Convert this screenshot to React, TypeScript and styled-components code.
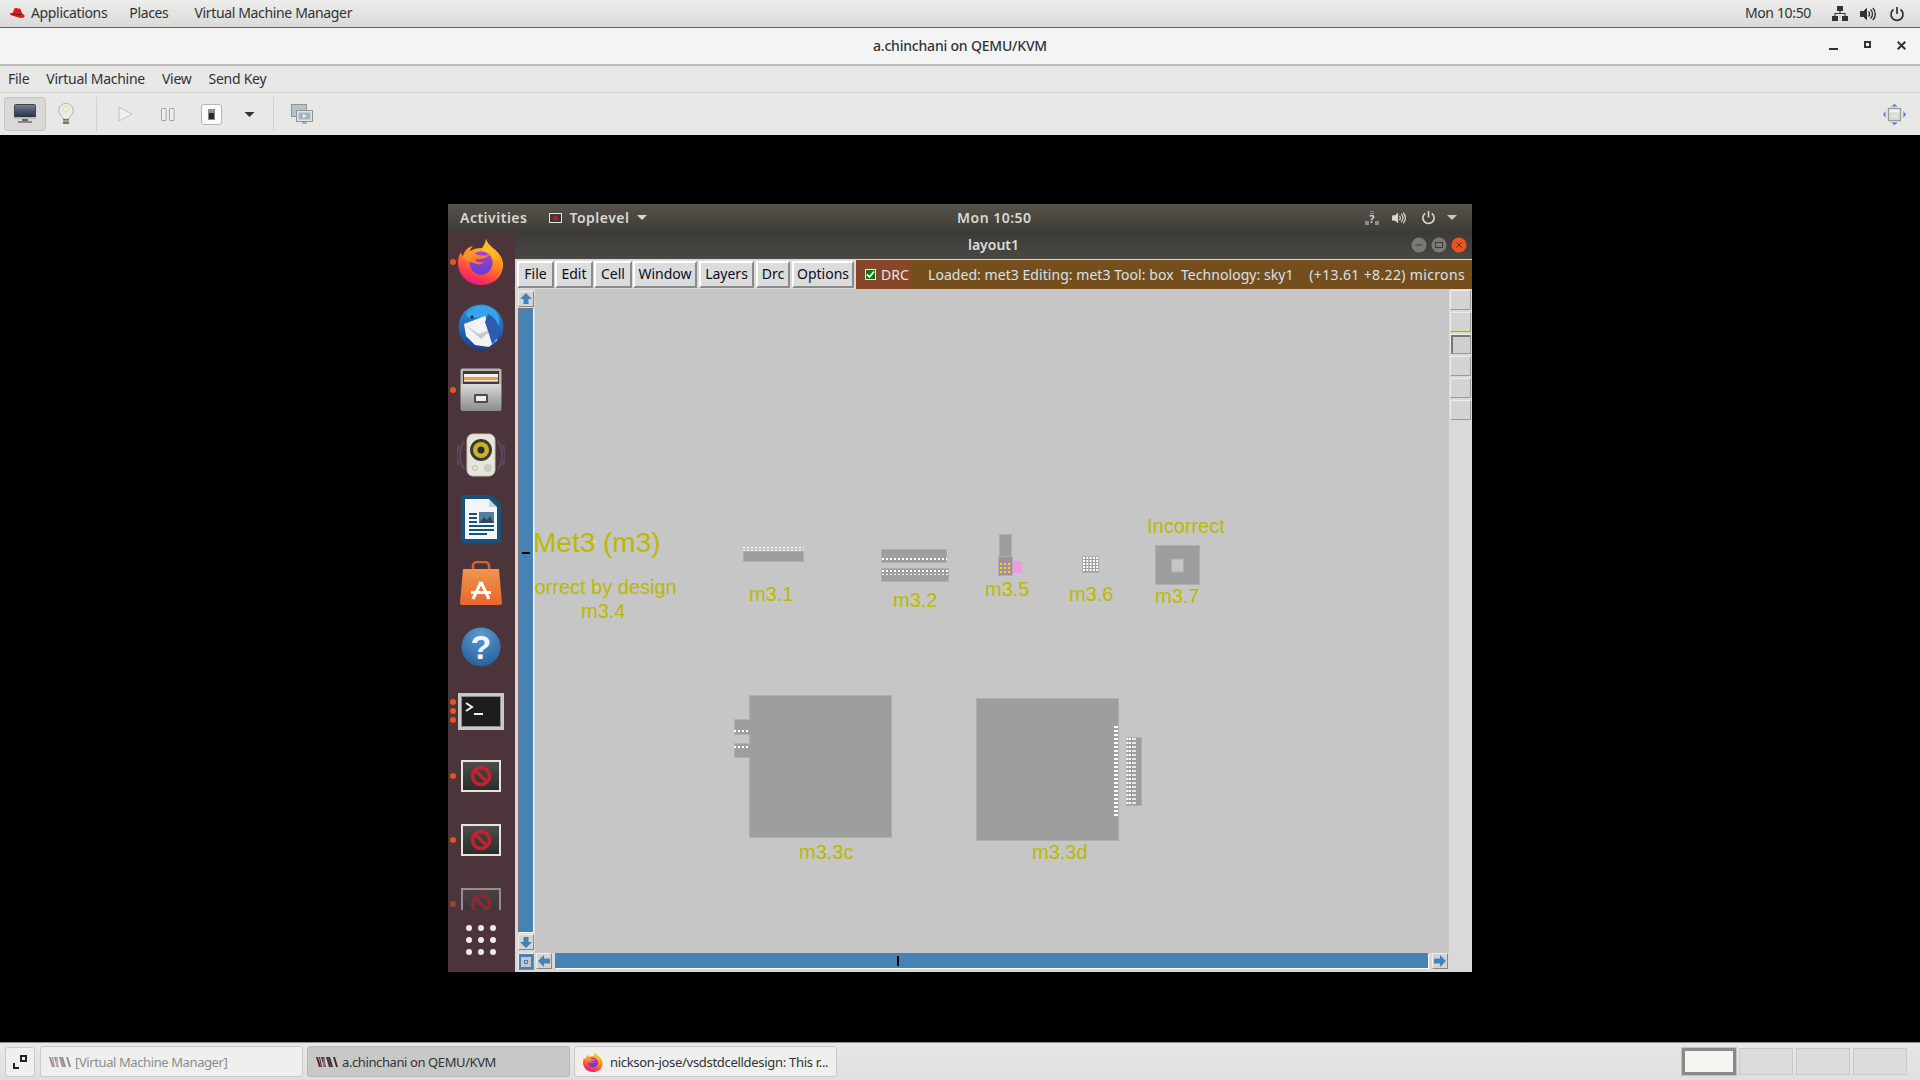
import React from "react";
import styled, { createGlobalStyle } from "styled-components";

const Global = createGlobalStyle`
  html, body { margin: 0; padding: 0; background: #000; }
  #root { width: 1920px; height: 1080px; overflow: hidden; }
`;

const UI = `"Noto Sans", "Open Sans", sans-serif`;

const Screen = styled.div`
  width: 1920px; height: 1080px; display: flex; flex-direction: column;
  background: #000; font-family: ${UI}; font-size: 14px; color: #2e3436;
`;
const TopPanel = styled.header`
  height: 27px; flex: none; display: flex; align-items: center; padding: 0 15px 0 9px;
  background: linear-gradient(#ededeb, #dadad8); border-bottom: 1px solid #5c5c5c; box-sizing: content-box;
`;
const PanelItem = styled.span<{ $gap?: number }>`
  margin-left: ${p => p.$gap ?? 0}px; margin-top: -2px; letter-spacing: -0.35px; color: #2e3436; line-height: 1;
`;
const Spacer = styled.div`flex: 1;`;
const PanelIcon = styled.span<{ $gap: number }>`
  display: inline-flex; margin-left: ${p => p.$gap}px;
`;
const TitleBar = styled.div`
  height: 35px; flex: none; display: flex; align-items: center; justify-content: center;
  position: relative; background: #f4f4f4; border-bottom: 2px solid #bdbdbb; padding-bottom: 1px; box-sizing: content-box;
  font-weight: 500; letter-spacing: -0.2px; color: #2e3436;
`;
const WindowControls = styled.div`
  position: absolute; right: 14px; top: 13px; display: flex; gap: 26px; align-items: flex-start;
`;
const MenuBar = styled.nav`
  height: 27px; flex: none; display: flex; align-items: center; padding-left: 8px; gap: 17px;
  background: #e8e8e7; border-bottom: 1px solid #d3d3d1; box-sizing: content-box; margin-top: -1px;
`;
const MenuEntry = styled.span`letter-spacing: -0.27px; color: #2e3436;`;
const Toolbar = styled.div`
  height: 42px; flex: none; display: flex; align-items: center; background: #e8e8e7; padding-left: 4px;
`;
const ToolToggle = styled.div`
  width: 42px; height: 34px; display: flex; align-items: center; justify-content: center;
  background: #d9d9d7; border: 1px solid #c6c6c4; border-radius: 3px; box-sizing: border-box;
`;
const ToolButton = styled.div<{ $w: number }>`
  width: ${p => p.$w}px; height: 34px; display: flex; align-items: center; justify-content: center; flex: none;
`;
const ToolSep = styled.div<{ $l?: number }>`
  width: 1px; height: 34px; background: #d2d2d0; margin: 0 10px 0 ${p => p.$l ?? 10}px;
`;
const FitIcon = styled.div`margin-left: auto; margin-right: 14px; display: flex;`;

const Viewer = styled.main`
  flex: 1; min-height: 0; padding: 69px 0 0 448px; background: #000;
`;
const Guest = styled.div`
  width: 1024px; height: 768px; display: flex; flex-direction: column; overflow: hidden;
`;
const GuestPanel = styled.div`
  height: 27px; flex: none; display: grid; grid-template-columns: 497px auto 1fr; align-items: center;
  padding: 0 15px 0 12px; background: linear-gradient(#56524a, #3f3d39);
  color: #d9d8d3; font-family: "Noto Sans", sans-serif; font-size: 14px; font-weight: 600; letter-spacing: 0.5px;
`;
const GuestLeft = styled.div`display: flex; align-items: center;`;
const GuestMenu = styled.span`display: inline-flex; align-items: center; gap: 7px; margin-left: 22px;`;
const GuestRight = styled.div`display: flex; align-items: center; justify-content: flex-end;`;
const GuestIcon = styled.span<{ $gap?: number }>`display: inline-flex; margin-left: ${p => p.$gap ?? 0}px;`;
const GuestBody = styled.div`flex: 1; min-height: 0; display: flex;`;
const Dock = styled.aside`
  width: 67px; flex: none; display: flex; flex-direction: column; background: #4b343a;
`;
const DockList = styled.div`
  height: 679px; flex: none; overflow: hidden; display: flex; flex-direction: column; padding-right: 1px;
`;
const DockItem = styled.div<{ $fade?: boolean; $first?: boolean }>`
  height: 64.2px; flex: none; display: flex; align-items: center; justify-content: center;
  margin-top: ${p => (p.$first ? -1 : 0)}px;
  position: relative; opacity: ${p => (p.$fade ? 0.5 : 1)};
`;
const RunDots = styled.div`
  position: absolute; left: 2px; top: 0; bottom: 0; display: flex; flex-direction: column;
  justify-content: center; gap: 3px;
`;
const RunDot = styled.i`display: block; width: 6px; height: 6px; border-radius: 50%; background: #e9541f;`;
const AppGrid = styled.div`
  display: grid; grid-template-columns: repeat(3, 6px); gap: 6px; justify-content: center; padding: 15px 1px 0 0;
`;
const AppDot = styled.i`display: block; width: 6px; height: 6px; border-radius: 50%; background: #eeeae8;`;

const MagicWindow = styled.section`flex: 1; min-width: 0; display: flex; flex-direction: column;`;
const MagicTitle = styled.div`
  height: 27px; padding-bottom: 1px; flex: none; display: flex; align-items: center; justify-content: center; position: relative;
  background: linear-gradient(#3c3a36, #4a4843); color: #dcdbd6; font-size: 14px; font-weight: 600;
  border-bottom: 1px solid #d8d8d8; box-sizing: content-box;
`;
const TitleButtons = styled.div`
  position: absolute; right: 5px; top: 6px; display: flex; gap: 4px;
`;
const MagicMenu = styled.div`
  height: 29px; flex: none; display: flex; background: #d9d9d9; align-items: stretch;
`;
const MenuBtn = styled.button<{ $w: number; $m?: number }>`
  width: ${p => p.$w}px; margin: 1px 0 1px ${p => p.$m ?? 1}px; padding: 0 0 2px; box-sizing: border-box; flex: none;
  background: #dcdcdc; color: #0c0c20; font: 14px ${UI};
  border: 2px solid; border-color: #fff #8a8a8a #8a8a8a #fff;
`;
const DrcBtn = styled.div`
  width: 56px; margin-left: 2px; flex: none; display: flex; align-items: center; gap: 5px; padding: 0 0 1px 9px;
  box-sizing: border-box; background: #87452a; color: #e6e6e6; font-size: 14px;
`;
const DrcCheck = styled.span`
  width: 11px; height: 11px; flex: none; background: #0a7a18; border: 1px solid #e6e6e6;
  display: flex; align-items: center; justify-content: center; box-sizing: border-box;
`;
const Status = styled.div`
  flex: 1; display: flex; justify-content: space-between; align-items: center; padding: 0 7px 1px 16px;
  background: #744f1d; color: #d6e2ea; font-size: 14px; white-space: pre;
`;
const StatusInfo = styled.span`letter-spacing: 0.05px;`;
const StatusCoord = styled.span`letter-spacing: 0.35px;`;
const MagicBody = styled.div`
  flex: 1; min-height: 0; display: grid; grid-template-columns: 20px 914px 23px; grid-template-rows: 664px 19px;
  background: #d9d9d9;
`;
const VScroll = styled.div`
  grid-row: 1 / 3; display: flex; flex-direction: column; align-items: center; padding: 2px 0 2px 1px;
`;
const ArrowBtn = styled.div`
  width: 16px; height: 16px; flex: none; display: flex; align-items: center; justify-content: center;
  background: #d4d4d4; border: 1px solid; border-color: #eee #888 #888 #eee; box-sizing: border-box;
`;
const VTrough = styled.div`
  flex: 1; width: 16px; margin: 1px 0; background: #4682b4; border: 1px solid; border-color: #777 #fff #fff #777;
  box-sizing: border-box; position: relative;
`;
const VMark = styled.i`position: absolute; left: 3px; top: 243px; width: 8px; height: 2px; background: #000;`;
const Corner = styled(ArrowBtn)`margin-top: 3px; height: 17px; background: #4682b4;`;
const CornerInner = styled.i`
  display: block; width: 10px; height: 10px; box-sizing: border-box; background: #c6c6c6; border: 3px solid #c6c6c6;
  outline: 1px solid #4682b4; outline-offset: -4px;
`;
const Canvas = styled.div`position: relative; overflow: hidden; background: #c6c6c6;`;
const LayoutArt = styled.svg`position: absolute; inset: 0; display: block;`;
const Label = styled.span<{ $x: number; $y: number; $s: number }>`
  position: absolute; left: ${p => p.$x - 535}px; top: ${p => p.$y - 289 - p.$s / 2}px;
  font: ${p => p.$s}px/${p => p.$s}px "Liberation Sans", Arial, sans-serif; color: #bbb900; white-space: nowrap;
`;
const Palette = styled.div`
  grid-row: 1 / 3; grid-column: 3; display: flex; flex-direction: column; gap: 2px; padding: 1px 1px 0 1px; align-items: stretch;
`;
const PaletteCell = styled.div<{ $tone?: "plain" | "yellow" | "dark" }>`
  height: 20px; box-sizing: border-box; background: #d4d4d4;
  border: 1px solid; border-color: #eee #999 #999 #eee;
  ${p => p.$tone === "yellow" ? "box-shadow: inset 0 0 0 1px #dcdc80;" : ""}
  ${p => p.$tone === "dark" ? "box-shadow: inset 1px 1px 0 1px #777; background:#cfcfcf;" : ""}
`;
const HScroll = styled.div`
  grid-column: 2; grid-row: 2; display: flex; align-items: flex-start; padding: 0 1px; gap: 3px;
`;
const HTrough = styled.div`
  flex: 1; height: 16px; background: #4682b4; border: 1px solid; border-color: #777 #fff #fff #777;
  box-sizing: border-box; position: relative;
`;
const HMark = styled.i`position: absolute; left: 341px; top: 2px; width: 2px; height: 10px; background: #000;`;

const Taskbar = styled.footer`
  height: 38px; flex: none; display: flex; align-items: center; padding: 0 13px 0 5px;
  background: linear-gradient(#e8e8e6, #dfdfdd); border-top: 1px solid #8f8f8d; box-sizing: border-box;
`;
const ShowDesktop = styled.div`
  width: 30px; height: 30px; flex: none; display: flex; align-items: center; justify-content: center;
  background: #efefee; border: 1px solid #c9c9c7; border-radius: 3px; box-sizing: border-box; margin-right: 5px;
`;
const TaskBtn = styled.div<{ $active?: boolean; $dim?: boolean; $wide?: boolean }>`
  width: 263px; height: 31px; flex: none; display: flex; align-items: center;
  gap: ${p => (p.$wide ? 7 : 3)}px; padding-left: ${p => (p.$wide ? 8 : 7)}px; margin-right: 4px;
  box-sizing: border-box; border: 1px solid ${p => (p.$active ? "#b8b8b6" : "#c9c9c7")}; border-radius: 3px;
  background: ${p => (p.$active ? "#c8c8c6" : "#efefee")}; color: ${p => (p.$dim ? "#8b8d8e" : "#2e3436")};
  font-size: 13px; letter-spacing: ${p => (p.$wide ? -0.3 : -0.4)}px; white-space: nowrap;
`;
const Workspaces = styled.div`margin-left: auto; display: flex; gap: 3px;`;
const Workspace = styled.div<{ $on?: boolean }>`
  width: 54px; height: 27px; box-sizing: border-box;
  background: ${p => (p.$on ? "#f6f5f2" : "#dcdcdc")};
  border: ${p => (p.$on ? "3px solid #8a8a8a" : "1px solid #cacac8")};
  ${p => (p.$on ? "outline: 1px solid #c0c0be;" : "")}
`;

/* ---- icons ---- */
const Hat = () => (
  <svg width="16" height="13" viewBox="0 0 16 13">
    <path d="M4 6 C4.5 3 5 1 7 1 C8 1 9 2 10.5 1.5 C12 1.5 12.5 5 13 6.5 C14.5 7 16 8 15.5 9.5 C15 11.5 11 11 8 10 C5 9 1 8.5 1 7 C1 6 2.5 5.8 4 6Z" fill="#e01a1a" />
    <path d="M3.5 6.2 C6 7.5 10 8.5 13 6.8" stroke="#222" strokeWidth="0.8" fill="none" />
  </svg>
);
const Network = ({ c = "#2e3436" }: { c?: string }) => (
  <svg width="16" height="16" viewBox="0 0 16 16" fill={c}>
    <rect x="5" y="0" width="6" height="5" /><rect x="0" y="10" width="6" height="5" /><rect x="10" y="10" width="6" height="5" />
    <path d="M7.5 5h1v2h5v3h-1V8H3.500v2h-1V7h5z" />
  </svg>
);
const Volume = ({ c = "#2e3436", s = 16 }: { c?: string; s?: number }) => (
  <svg width={s} height={s} viewBox="0 0 16 16" fill="none" stroke={c}>
    <path d="M0.500 5.500h3l3-3v11l-3-3h-3z" fill={c} />
    <path d="M8.500 5.500a3.500 3.500 0 0 1 0 5M10.500 3.500a6 6 0 0 1 0 9M12.800 2a8.500 8.500 0 0 1 0 12" strokeWidth="1.400" />
  </svg>
);
const Power = ({ c = "#2e3436", s = 16 }: { c?: string; s?: number }) => (
  <svg width={s} height={s} viewBox="0 0 16 16" fill="none" stroke={c} strokeWidth="1.700">
    <path d="M4.500 3.500a6 6 0 1 0 7 0M8 1v7" />
  </svg>
);
const Caret = ({ c = "#d9d8d3", w = 10, h = 5 }: { c?: string; w?: number; h?: number }) => (
  <svg width={w} height={h} viewBox="0 0 10 5"><path d="M0 0h10L5 5z" fill={c} /></svg>
);
const Monitor = () => (
  <svg width="22" height="20" viewBox="0 0 22 20">
    <defs><linearGradient id="mon" x1="0" y1="0" x2="0" y2="1"><stop offset="0" stopColor="#6f8399" /><stop offset="1" stopColor="#1c2733" /></linearGradient></defs>
    <rect x="0.500" y="0.500" width="21" height="14" rx="1" fill="url(#mon)" stroke="#444" />
    <rect x="0" y="13" width="22" height="2" fill="#bbb" />
    <rect x="8" y="15" width="6" height="2" fill="#666" /><rect x="4" y="17" width="14" height="2" fill="#888" />
  </svg>
);
const Bulb = () => (
  <svg width="16" height="22" viewBox="0 0 16 22">
    <path d="M8 .5a7 7 0 0 1 4 12.800c-.8.7-1 1.700-1 2.700H5c0-1-.2-2-1-2.700A7 7 0 0 1 8 .5z" fill="#ececea" stroke="#b4b4ac" />
    <circle cx="8" cy="6" r="3" fill="none" stroke="#eae6a0" strokeWidth="1.500" />
    <rect x="5" y="16" width="6" height="5" fill="#77776f" /><rect x="5" y="17.500" width="6" height="1" fill="#ccc" />
  </svg>
);
const PlayIcon = () => (
  <svg width="15" height="16" viewBox="0 0 15 16"><path d="M1 1l13 7L1 15z" fill="#efefee" stroke="#c2c2c0" /></svg>
);
const PauseIcon = () => (
  <svg width="14" height="13" viewBox="0 0 14 13" fill="#efefee" stroke="#a4a4a2">
    <rect x=".5" y=".5" width="4.500" height="12" rx=".5" /><rect x="8.500" y=".5" width="4.500" height="12" rx=".5" />
  </svg>
);
const SwitchIcon = () => (
  <svg width="21" height="21" viewBox="0 0 21 21">
    <rect x=".5" y=".5" width="20" height="20" rx="2.500" fill="#fbfbfb" stroke="#b5b5b3" />
    <rect x="7" y="5" width="7" height="11" fill="#8e8e8c" /><rect x="8" y="9" width="5" height="6" fill="#2a2a2a" />
  </svg>
);
const ScreensIcon = () => (
  <svg width="22" height="21" viewBox="0 0 22 21">
    <rect x=".5" y=".5" width="15" height="12" fill="#b9c1c9" stroke="#8f9396" />
    <rect x="5.500" y="6.500" width="16" height="11" fill="#dfe3e6" stroke="#8f9396" />
    <rect x="7.500" y="8.500" width="12" height="7" fill="#a8b3bd" /><path d="M12 10l3.500 2-3.500 2z" fill="#f2f2f2" />
    <rect x="11" y="18" width="5" height="2" fill="#b0b0ae" />
  </svg>
);
const Fit = () => (
  <svg width="23" height="21" viewBox="0 0 23 21">
    <path d="M11.500 0l3 2.500h-6zM11.500 21l3-2.500h-6zM0 10.500l2.500-3v6zM23 10.500l-2.500-3v6z" fill="#4f7fbd" stroke="#8fb0d8" strokeWidth=".6" />
    <rect x="5.500" y="4.500" width="12" height="12" fill="#f2f2f2" stroke="#9a9a98" strokeWidth="1.400" />
    <rect x="7" y="9" width="9" height="6" fill="#e2e2e0" stroke="#c2c2c0" strokeWidth=".6" />
  </svg>
);
const WinMin = () => <svg width="9" height="10" viewBox="0 0 9 10"><rect x="0" y="7" width="9" height="2" fill="#2e3436" /></svg>;
const WinMax = () => <svg width="7" height="7" viewBox="0 0 7 7"><rect x="1" y="1" width="5" height="5" fill="none" stroke="#2e3436" strokeWidth="2" /></svg>;
const WinClose = () => <svg width="9" height="9" viewBox="0 0 9 9"><path d="M.7.7l7.600 7.600M8.300.7L.7 8.300" stroke="#2e3436" strokeWidth="2" /></svg>;

const Firefox = ({ s = 46 }: { s?: number }) => (
  <svg width={s} height={s} viewBox="0 0 46 46">
    <defs>
      <linearGradient id="ffa" x1="0.700" y1="0" x2="0.300" y2="1"><stop offset="0" stopColor="#ffd32c" /><stop offset=".45" stopColor="#ff8a1f" /><stop offset=".8" stopColor="#ff3750" /><stop offset="1" stopColor="#e31587" /></linearGradient>
      <linearGradient id="ffb" x1="0.500" y1="0" x2="0.500" y2="1"><stop offset="0" stopColor="#a83fd0" /><stop offset="1" stopColor="#5c3fd6" /></linearGradient>
      <linearGradient id="ffc" x1="0" y1="0" x2="1" y2="1"><stop offset="0" stopColor="#ffa22c" /><stop offset="1" stopColor="#ff5a2c" /></linearGradient>
    </defs>
    <path d="M28 0c1 4 4 6 7 9 5 4 9 8 10 15 1 13-9 22-22 22C10 46 0 36 0 24c0-4 1-8 3-11 0 2 1 3 2 4 1-5 5-9 10-10-2 2-3 4-3 5 3-2 7-3 12-3 2-3 4-6 4-9z" fill="url(#ffa)" />
    <circle cx="23" cy="24" r="11.500" fill="url(#ffb)" />
    <path d="M5 17c3-3 8-4 13-2 5 2 9 2 14 0-3 5-9 5-13 5-1 0-2 1-1 2 3 2 5 1 8 1-2 3-7 3-10 1C11 23 8 22 5 17z" fill="url(#ffc)" />
    <path d="M28 0c1 4 3 6 5 8 3 3 5 7 4 13-3-5-6-8-12-10 2-3 3-7 3-11z" fill="#ffbd2e" />
  </svg>
);
const Thunderbird = () => (
  <svg width="48" height="48" viewBox="0 0 48 48">
    <defs><linearGradient id="tb" x1="0.500" y1="0" x2="0.500" y2="1"><stop offset="0" stopColor="#2f93e0" /><stop offset="1" stopColor="#1b3f8e" /></linearGradient></defs>
    <circle cx="24" cy="25" r="22.500" fill="url(#tb)" />
    <path d="M9 12c6-8 18-12 27-5 5 4 7 10 6 17-3-6-7-9-14-9-6 0-10 1-13 1-2 0-5 0-6-4z" fill="#37a3ec" />
    <path d="M7 22l21-8 12 24-8 7-14-2-9-9z" fill="#f3f3f3" />
    <path d="M8 23l14 9 15-6-13 11z" fill="#c8c9ce" />
    <path d="M31 12c5 2 11 8 11 16 0 6-3 11-7 14l-3-10-4-12z" fill="#2d5cb0" />
    <circle cx="15" cy="15" r="1.500" fill="#123" />
  </svg>
);
const Files = () => (
  <svg width="42" height="44" viewBox="0 0 42 44">
    <defs>
      <linearGradient id="fi" x1="0" y1="0" x2="0" y2="1"><stop offset="0" stopColor="#d8d8d6" /><stop offset="1" stopColor="#8d8d8b" /></linearGradient>
    </defs>
    <rect x="0.500" y="0.500" width="41" height="18" rx="2" fill="#b5b5b3" />
    <rect x="3" y="3" width="36" height="14" fill="#3c3c3c" />
    <rect x="4" y="9" width="34" height="5" fill="#ef9d4a" /><rect x="4" y="6" width="34" height="3" fill="#f4f1e8" /><rect x="4" y="12" width="34" height="1" fill="#fff" opacity=".7" />
    <rect x="0.500" y="16" width="41" height="27" rx="2" fill="url(#fi)" />
    <rect x="14" y="26" width="14" height="9" rx="1.500" fill="#4b4b4b" /><rect x="16" y="28" width="10" height="5" fill="#eee" />
  </svg>
);
const Speaker = () => (
  <svg width="48" height="44" viewBox="0 0 48 44">
    <path d="M7 8a26 26 0 0 0 0 28M41 8a26 26 0 0 1 0 28M2 12a26 26 0 0 0 0 20M46 12a26 26 0 0 1 0 20" stroke="#5b5f78" strokeWidth="2" fill="none" opacity=".6" />
    <rect x="10" y="1" width="28" height="42" rx="6" fill="#e8e6da" stroke="#c5c3b6" />
    <circle cx="24" cy="17" r="11" fill="#3a3a38" /><circle cx="24" cy="17" r="8" fill="#c7b524" /><circle cx="24" cy="17" r="3.500" fill="#2a2a28" />
    <circle cx="18" cy="35" r="2.500" fill="none" stroke="#c0beb2" /><circle cx="31" cy="35" r="4" fill="#cfcdc0" />
  </svg>
);
const Writer = () => (
  <svg width="40" height="48" viewBox="0 0 40 48">
    <path d="M2 0h28l10 10v36a2 2 0 0 1-2 2H2a2 2 0 0 1-2-2V2a2 2 0 0 1 2-2z" fill="#18527c" />
    <path d="M4 4h24l8 8v32H4z" fill="#f4f5f6" />
    <path d="M28 0l12 12H28z" fill="#18527c" /><path d="M28 4v8h8z" fill="#c5d7e4" />
    <g fill="#18527c"><rect x="8" y="18" width="8" height="2" /><rect x="8" y="22" width="8" height="2" /><rect x="8" y="26" width="8" height="2" /><rect x="8" y="30" width="25" height="2" /><rect x="8" y="34" width="25" height="2" /><rect x="8" y="38" width="18" height="2" /></g>
    <rect x="18" y="17" width="15" height="11" fill="#4f7e9f" /><path d="M18 28l5-6 3 3 3-4 4 7z" fill="#2e4a60" />
  </svg>
);
const Bag = () => (
  <svg width="42" height="44" viewBox="0 0 42 44">
    <defs><linearGradient id="bg" x1="0" y1="0" x2="0" y2="1"><stop offset="0" stopColor="#f0954e" /><stop offset="1" stopColor="#e8662c" /></linearGradient></defs>
    <path d="M13 10V5a4 4 0 0 1 4-4h8a4 4 0 0 1 4 4v5" fill="none" stroke="#d9622a" strokeWidth="2.500" />
    <path d="M3 8h36l3 34a2 2 0 0 1-2 2H2a2 2 0 0 1-2-2z" fill="url(#bg)" />
    <path d="M21 21l-8 17M21 21l8 17" stroke="#fff" strokeWidth="3" fill="none" />
    <rect x="11" y="30" width="20" height="3" fill="#fff" />
  </svg>
);
const Help = () => (
  <svg width="40" height="40" viewBox="0 0 40 40">
    <defs><radialGradient id="hp" cx=".5" cy=".2" r=".9"><stop offset="0" stopColor="#5d9ad2" /><stop offset="1" stopColor="#1f5a94" /></radialGradient></defs>
    <circle cx="20" cy="20" r="19.500" fill="url(#hp)" />
    <text x="20" y="32" textAnchor="middle" fontFamily="Liberation Sans" fontWeight="700" fontSize="34" fill="#f2f5f8">?</text>
  </svg>
);
const Terminal = () => (
  <svg width="46" height="37" viewBox="0 0 46 37">
    <rect x="0" y="0" width="46" height="37" fill="#c9c9c7" />
    <rect x="3" y="3" width="40" height="31" fill="#8e8e8e" />
    <rect x="4" y="4" width="38" height="29" fill="#1d1d1d" />
    <path d="M8 10l6 4-6 4" stroke="#f2f2f2" strokeWidth="2" fill="none" />
    <rect x="16" y="20" width="9" height="2" fill="#f2f2f2" />
  </svg>
);
const Blocked = () => (
  <svg width="40" height="32" viewBox="0 0 40 32">
    <defs><linearGradient id="bk" x1="0" y1="0" x2="0" y2="1"><stop offset="0" stopColor="#4c4c4c" /><stop offset="1" stopColor="#2c2c2c" /></linearGradient></defs>
    <rect width="40" height="32" fill="#e4e4e2" />
    <rect x="2" y="2" width="36" height="28" fill="url(#bk)" />
    <circle cx="20" cy="16" r="8.500" fill="none" stroke="#c8202e" strokeWidth="3.500" />
    <path d="M14 10l12 12" stroke="#c8202e" strokeWidth="3.500" />
  </svg>
);
const MiniBlocked = () => (
  <svg width="13" height="10" viewBox="0 0 13 10" >
    <rect x=".5" y=".5" width="12" height="9" fill="#3a3a3a" stroke="#e4e4e2" />
    <circle cx="6.500" cy="5" r="2.500" fill="#b1202b" />
  </svg>
);
const QNet = () => (
  <svg width="14" height="14" viewBox="0 0 14 14" fill="#8d8c87">
    <rect x="5" y="0" width="4" height="1" /><rect x="5" y="2" width="4" height="1" /><rect x="0" y="10" width="4" height="4" /><rect x="10" y="10" width="4" height="4" />
    <text x="7" y="12" textAnchor="middle" fontSize="11" fontWeight="700" fontFamily="Noto Sans" fill="#d9d8d3">?</text>
  </svg>
);
const Vmm = ({ o = 1 }: { o?: number }) => (
  <svg width="24" height="12" viewBox="0 0 24 12" opacity={o}>
    <path d="M1 1l3 10h2L3 1zM6 1l3 10h2L8 1zM11 1l3 10h2L13 1z" fill="#6a1f2a" />
    <path d="M4 1l2 10h1L5 1zM13 1l3 10h2l-3-10zM18 1l3 10h2l-3-10z" fill="#333" />
    <rect x="8" y="1" width="2" height="10" fill="#777" />
  </svg>
);
const Circle = ({ f, sym }: { f: string; sym: React.ReactNode }) => (
  <svg width="16" height="16" viewBox="0 0 16 16">
    <circle cx="8" cy="8" r="7.500" fill={f} />{sym}
  </svg>
);
const Arrow = ({ dir }: { dir: "u" | "d" | "l" | "r" }) => {
  const d = { u: "M7 1l6 6H9.500v5h-5V7H1z", d: "M7 13l6-6H9.500V2h-5v5H1z", l: "M1 7l6-6v3.500h6v5H7V13z", r: "M13 7L7 1v3.500H1v5h6V13z" }[dir];
  return <svg width="14" height="14" viewBox="0 0 14 14"><path d={d} fill="#4682b4" /></svg>;
};
const Desk = () => (
  <svg width="14" height="14" viewBox="0 0 14 14" fill="none" stroke="#222" strokeWidth="2">
    <path d="M1 8v5h5M8 6V1h5v5z" />
  </svg>
);

const plus: [number, number][] = [[595,541],[597,587],[602,611],[770,594],[914,600],[1006,588],[1091,594],[1184,525],[1176,596],[825,851],[1058,851]];
const Dots = ({ x1, x2, y, w = 2, c = "#fff" }: { x1: number; x2: number; y: number; w?: number; c?: string }) => (
  <line x1={x1} x2={x2} y1={y} y2={y} stroke={c} strokeWidth={w} strokeDasharray="2 2" />
);
const VDots = ({ x, y1, y2, w = 2, c = "#fff" }: { x: number; y1: number; y2: number; w?: number; c?: string }) => (
  <line x1={x} x2={x} y1={y1} y2={y2} stroke={c} strokeWidth={w} strokeDasharray="2 2" />
);
const M = { fill: "#9e9e9e", stroke: "#aeaeae", strokeWidth: 1 };

const Art = () => (
  <LayoutArt width="914" height="664" viewBox="535 289 914 664">
    <rect x="743.500" y="551.500" width="60" height="10" {...M} />
    <Dots x1={743} x2={804} y={547.500} w={1} />
    <Dots x1={743} x2={804} y={550} w={1} />
    <rect x="881.500" y="549.500" width="65" height="13" {...M} />
    <Dots x1={882} x2={947} y={559} />
    <rect x="881.500" y="568.500" width="67" height="13" {...M} />
    <Dots x1={882} x2={949} y={571} />
    <Dots x1={882} x2={949} y={574.500} w={1} />

    <rect x="999.500" y="534.500" width="12" height="26" {...M} />
    <rect x="998" y="561" width="24" height="12" fill="#ee9ae2" />
    <rect x="998.500" y="556.500" width="14" height="19" fill="#a88ca4" stroke="#aeaeae" />
    <g>
      <Dots x1={1000} x2={1012} y={564} c="#e8e000" />
      <Dots x1={1000} x2={1012} y={568} c="#e8e000" />
      <Dots x1={1000} x2={1012} y={572} c="#e8e000" />
    </g>

    <rect x="1082.500" y="556.500" width="16" height="16" {...M} />
    {[558, 561, 564, 567, 570].map(y => (<line key={y} x1="1083" x2="1098" y1={y} y2={y} stroke="#fff" strokeWidth="2" strokeDasharray="2 1.300" />))}

    <path fillRule="evenodd" d="M1155.500 545.500h44v39h-44zM1171.500 559v13h12v-13z" {...M} />

    <path d="M749.500 695.500h142v142h-142v-80h-15v-14h15v-9h-15v-15h15z" {...M} />
    <Dots x1={734} x2={749} y={731} />
    <Dots x1={734} x2={749} y={747} />

    <rect x="976.500" y="698.500" width="142" height="142" {...M} />
    <VDots x={1115} y1={726} y2={816} />
    <VDots x={1117} y1={726} y2={816} />
    <rect x="1126.500" y="737.500" width="15" height="68" {...M} />
    <VDots x={1127.500} y1={738} y2={805} />
    <VDots x={1130} y1={738} y2={805} />
    <VDots x={1133} y1={738} y2={805} w={1.500} />
    <VDots x={1135} y1={738} y2={805} w={1.500} />
    {plus.map(([x, y]) => (
      <path key={`${x}-${y}`} d={`M${x - 2} ${y + .5}h4M${x} ${y - 1.500}v4`} stroke="#e8e84a" strokeWidth="1" />
    ))}
  </LayoutArt>
);

const Group = styled.span`display: inline-flex; align-items: center;`;

export default function App() {
  return (
    <Screen>
      <Global />
      <TopPanel>
        <Group><Hat /></Group>
        <PanelItem $gap={6}>Applications</PanelItem>
        <PanelItem $gap={22}>Places</PanelItem>
        <PanelItem $gap={26}>Virtual Machine Manager</PanelItem>
        <Spacer />
        <PanelItem>Mon 10:50</PanelItem>
        <PanelIcon $gap={21}><Network /></PanelIcon>
        <PanelIcon $gap={12}><Volume /></PanelIcon>
        <PanelIcon $gap={13}><Power /></PanelIcon>
      </TopPanel>
      <TitleBar>
        a.chinchani on QEMU/KVM
        <WindowControls><WinMin /><WinMax /><WinClose /></WindowControls>
      </TitleBar>
      <MenuBar>
        <MenuEntry>File</MenuEntry>
        <MenuEntry>Virtual Machine</MenuEntry>
        <MenuEntry>View</MenuEntry>
        <MenuEntry>Send Key</MenuEntry>
      </MenuBar>
      <Toolbar>
        <ToolToggle><Monitor /></ToolToggle>
        <ToolButton $w={40}><Bulb /></ToolButton>
        <ToolSep />
        <ToolButton $w={36}><PlayIcon /></ToolButton>
        <ToolButton $w={50}><PauseIcon /></ToolButton>
        <ToolButton $w={36}><SwitchIcon /></ToolButton>
        <ToolButton $w={40}><Caret c="#2e3436" w={11} h={5} /></ToolButton>
        <ToolSep $l={4} />
        <ToolButton $w={36}><ScreensIcon /></ToolButton>
        <FitIcon><Fit /></FitIcon>
      </Toolbar>
      <Viewer>
        <Guest>
          <GuestPanel>
            <GuestLeft>
              <span>Activities</span>
              <GuestMenu><MiniBlocked />Toplevel <Caret /></GuestMenu>
            </GuestLeft>
            <span>Mon 10:50</span>
            <GuestRight>
              <GuestIcon><QNet /></GuestIcon>
              <GuestIcon $gap={13}><Volume c="#d9d8d3" s={14} /></GuestIcon>
              <GuestIcon $gap={15}><Power c="#d9d8d3" s={15} /></GuestIcon>
              <GuestIcon $gap={11}><Caret c="#c8c7c2" /></GuestIcon>
            </GuestRight>
          </GuestPanel>
          <GuestBody>
            <Dock>
              <DockList>
                <DockItem $first><RunDots><RunDot /></RunDots><Firefox /></DockItem>
                <DockItem><Thunderbird /></DockItem>
                <DockItem><RunDots><RunDot /></RunDots><Files /></DockItem>
                <DockItem><Speaker /></DockItem>
                <DockItem><Writer /></DockItem>
                <DockItem><Bag /></DockItem>
                <DockItem><Help /></DockItem>
                <DockItem><RunDots><RunDot /><RunDot /><RunDot /></RunDots><Terminal /></DockItem>
                <DockItem><RunDots><RunDot /></RunDots><Blocked /></DockItem>
                <DockItem><RunDots><RunDot /></RunDots><Blocked /></DockItem>
                <DockItem $fade><RunDots><RunDot /></RunDots><Blocked /></DockItem>
              </DockList>
              <AppGrid>
                {Array.from({ length: 9 }, (_, i) => <AppDot key={i} />)}
              </AppGrid>
            </Dock>
            <MagicWindow>
              <MagicTitle>
                layout1
                <TitleButtons>
                  <Circle f="#7a7975" sym={<rect x="4.500" y="7.500" width="7" height="1" fill="#3d3b37" />} />
                  <Circle f="#7a7975" sym={<rect x="4.500" y="5.500" width="7" height="5" fill="none" stroke="#3d3b37" />} />
                  <Circle f="#e95420" sym={<path d="M5.500 5.500l5 5M10.500 5.500l-5 5" stroke="#5a2410" />} />
                </TitleButtons>
              </MagicTitle>
              <MagicMenu>
                <MenuBtn $w={37} $m={2}>File</MenuBtn>
                <MenuBtn $w={38}>Edit</MenuBtn>
                <MenuBtn $w={38}>Cell</MenuBtn>
                <MenuBtn $w={64}>Window</MenuBtn>
                <MenuBtn $w={55} $m={2}>Layers</MenuBtn>
                <MenuBtn $w={34} $m={2}>Drc</MenuBtn>
                <MenuBtn $w={62} $m={2}>Options</MenuBtn>
                <DrcBtn>
                  <DrcCheck>
                    <svg width="9" height="9" viewBox="0 0 9 9"><path d="M1 4.500l2.500 2.500L8 1.500" stroke="#fff" strokeWidth="1.800" fill="none" /></svg>
                  </DrcCheck>
                  DRC
                </DrcBtn>
                <Status>
                  <StatusInfo>Loaded: met3 Editing: met3 Tool: box  Technology: sky1</StatusInfo>
                  <StatusCoord>(+13.61 +8.22) microns</StatusCoord>
                </Status>
              </MagicMenu>
              <MagicBody>
                <VScroll>
                  <ArrowBtn><Arrow dir="u" /></ArrowBtn>
                  <VTrough><VMark /></VTrough>
                  <ArrowBtn><Arrow dir="d" /></ArrowBtn>
                  <Corner><CornerInner /></Corner>
                </VScroll>
                <Canvas>
                  <Art />
                  <Label $x={533} $y={543} $s={28}>Met3 (m3)</Label>
                  <Label $x={520} $y={587} $s={20}>Correct by design</Label>
                  <Label $x={581} $y={611} $s={20}>m3.4</Label>
                  <Label $x={749} $y={594} $s={20}>m3.1</Label>
                  <Label $x={893} $y={600} $s={20}>m3.2</Label>
                  <Label $x={985} $y={589} $s={20}>m3.5</Label>
                  <Label $x={1069} $y={594} $s={20}>m3.6</Label>
                  <Label $x={1147} $y={526} $s={20}>Incorrect</Label>
                  <Label $x={1155} $y={596} $s={20}>m3.7</Label>
                  <Label $x={799} $y={852} $s={20}>m3.3c</Label>
                  <Label $x={1032} $y={852} $s={20}>m3.3d</Label>
                </Canvas>
                <Palette>
                  <PaletteCell />
                  <PaletteCell $tone="yellow" />
                  <PaletteCell $tone="dark" />
                  <PaletteCell />
                  <PaletteCell />
                  <PaletteCell />
                </Palette>
                <HScroll>
                  <ArrowBtn><Arrow dir="l" /></ArrowBtn>
                  <HTrough><HMark /></HTrough>
                  <ArrowBtn><Arrow dir="r" /></ArrowBtn>
                </HScroll>
              </MagicBody>
            </MagicWindow>
          </GuestBody>
        </Guest>
      </Viewer>
      <Taskbar>
        <ShowDesktop><Desk /></ShowDesktop>
        <TaskBtn $dim><Vmm o={0.5} />[Virtual Machine Manager]</TaskBtn>
        <TaskBtn $active><Vmm />a.chinchani on QEMU/KVM</TaskBtn>
        <TaskBtn $wide><Firefox s={20} />nickson-jose/vsdstdcelldesign: This r...</TaskBtn>
        <Workspaces>
          <Workspace $on /><Workspace /><Workspace /><Workspace />
        </Workspaces>
      </Taskbar>
    </Screen>
  );
}
